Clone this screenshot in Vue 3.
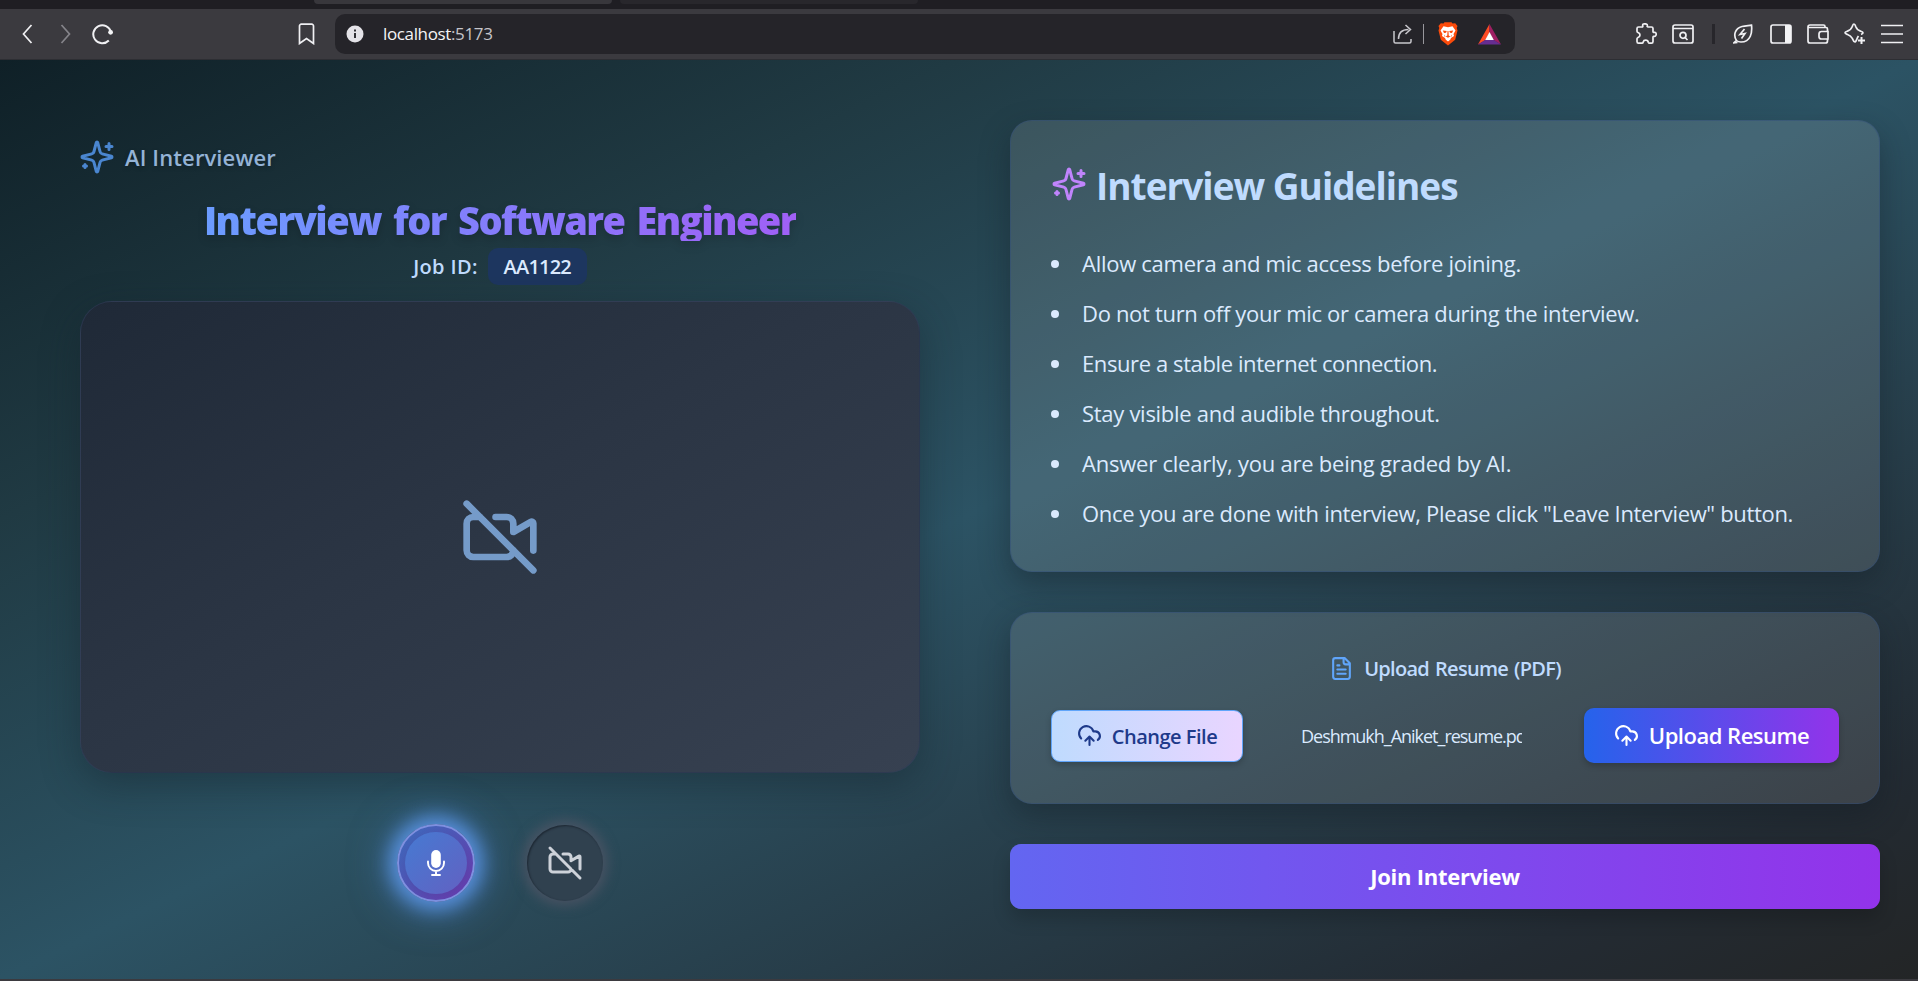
<script setup>
const guidelines = [
  { text: 'Allow camera and mic access before joining.', cls: 'g1' },
  { text: 'Do not turn off your mic or camera during the interview.', cls: 'g2' },
  { text: 'Ensure a stable internet connection.', cls: 'g3' },
  { text: 'Stay visible and audible throughout.', cls: 'g4' },
  { text: 'Answer clearly, you are being graded by AI.', cls: 'g5' },
  { text: 'Once you are done with interview, Please click "Leave Interview" button.', cls: 'g6' },
]
</script>

<template>
  <div class="window">
    <div class="tabstrip"><span class="tab active"></span><span class="tab"></span></div>
    <header class="toolbar">
      <svg class="i-back" width="11" height="20" viewBox="0 0 11 20"><path d="M9.5 1 1.5 10l8 9" /></svg>
      <svg class="i-fwd" width="11" height="20" viewBox="0 0 11 20"><path d="m1.5 1 8 9-8 9" /></svg>
      <svg class="i-reload" width="22" height="22" viewBox="0 0 22 22"><path d="M16.8 17.5A9 9 0 1 1 19 9" /><circle cx="18.6" cy="9.3" r="2.4" fill="#f3f3f5" stroke="none" /></svg>
      <svg class="i-mark" width="17" height="22" viewBox="0 0 17 22"><path d="M1.5 3a1.8 1.8 0 0 1 1.8-1.8h10.4A1.8 1.8 0 0 1 15.500 3v17.500l-7-5-7 5z" /></svg>
      <div class="address">
        <svg class="i-info" width="18" height="18" viewBox="0 0 18 18"><circle cx="9" cy="9" r="8.500" fill="#e4e3e8" stroke="none" /><path d="M9 8v5M9 4.500v2" stroke="#303034" stroke-width="2" /></svg>
        <span class="url">localhost<i>:5173</i></span>
        <svg class="i-share" width="20" height="20" viewBox="0 0 20 20"><path d="M1 7v10.500A1.500 1.500 0 0 0 2.500 19h14a1.500 1.500 0 0 0 1.500-1.500V15M5.500 15c0-6 3-9.500 10-9.500M12.500 1l5 4.500-5 4.500" /></svg>
        <span class="bar"></span>
        <svg class="i-brave" width="20" height="24" viewBox="0 0 20 24" stroke="none"><path fill="#fb4b0b" d="m5.500 1.500 1-1.300h7l1 1.300 2.700-.2L19.500 4l-.8 2 .8 2.500-2.300 9.200L10 23.500l-7.200-5.800L.5 8.500 1.300 6 .5 4l2.300-2.700z" /><path fill="#fff" d="m5.500 4.300 4.500.9 4.500-.9 3 4.200-2 3.500.5 2-3 2-.8 1.800L10 19.500l-2.200-1.700L7 16l-3-2 .5-2-2-3.500z" /><path fill="#fb4b0b" d="m4.800 8.500 4 .6-.8 1.600-2 .3zM15.200 8.500l-4 .6.8 1.600 2 .3zM9.500 9h1l.2 4.500 1.600 1-2.300 1.300-2.300-1.300 1.600-1zM6.500 12.500l1 2.500-1.200-.8zM13.500 12.500l-1 2.500 1.200-.8z" /></svg>
        <svg class="i-bat" width="23" height="21" viewBox="0 0 23 21" stroke="none"><path fill="#ff4b24" d="M11.500 0 0 20.500l7.500-4.600 4-7.400z" /><path fill="#9e1f63" d="M11.500 0 23 20.500l-7.500-4.600-4-7.400z" /><path fill="#662d91" d="M0 20.500h23l-7.500-4.800h-8z" /><path fill="#fff" d="m11.500 8 4.300 8H7.200z" /></svg>
      </div>
      <div class="tools">
        <svg width="22" height="22" viewBox="0 0 22 22"><path d="M2 5.500Q2 4 3.500 4H7c.8 0 1-.6.700-1.300C7.300 1 9 .800 10 .800s2.700.4 2.300 2C12 3.500 12.300 4 13 4h3.500Q18 4 18 5.500v3c0 .8.500 1 1.300.8 1.300-.2 1.900 1 1.900 2s-.8 2.200-2 2c-.7-.2-1.200.2-1.200 1v4.200q0 1.700-1.500 1.700h-2c-1 0-1-.4-1.200-1-.3-1.400-1.300-2-2.600-2s-2.200.5-2.500 1.800c-.2.900-.5 1.200-1.200 1.200H3.500Q2 20.200 2 18.500v-2.700c0-.8.4-1 1-1.300C4.300 14 5 13.300 5 12s-.8-2-2-2.500c-.6-.3-1-.6-1-1.300z" /></svg>
        <svg width="22" height="20" viewBox="0 0 22 20"><rect x="1" y="1" width="20" height="18" rx="2" /><path d="M1 4.500h20M13 13.500l2.500 2.500" /><circle cx="11" cy="11.300" r="3" /></svg>
        <span class="sep"></span>
        <svg class="i-leaf" width="20" height="20" viewBox="0 0 20 20"><path d="M3.500 16.500C0 11 2 4.500 9 2.500c3.500-.9 6.500-.8 9.500-1.300.8 7-.5 16.800-10.500 16.800-2 0-3.500-.5-4.500-1.500L1 18.800l3.500-.3M11.500 5 7 10.500l5-1-3.500 5" /></svg>
        <svg width="22" height="20" viewBox="0 0 22 20"><rect x="1" y="1" width="20" height="18" rx="2" /><path d="M15 1h6v18h-6z" fill="#f3f3f5" stroke="none" /></svg>
        <svg width="22" height="20" viewBox="0 0 22 20"><path d="M20.500 7V5q0-1.500-1.500-1.500H1.500M18 3.500V2.500Q18 1 16.500 1H3Q1 1 1 3v14q0 2 2 2h15.500q2 0 2-2v-2M21 7.500h-6.500Q12 7.500 12 10v2.500q0 2.500 2.500 2.500H21z" /></svg>
        <svg width="22" height="22" viewBox="0 0 22 22"><path stroke-linejoin="round" d="M14.500 13c-.6.8-1.100 1.700-1.500 2.700-.5 1.300-.9 2.600-2 3.300-1.500-.2-2-2-2.500-3.300C7.300 13.500 6 12.300 3.500 11.500 2.300 11.100 1 10.800 1 9.800s1.300-1.300 2.500-1.700C6 7.300 7.300 6 8.300 3.500 8.800 2.200 9 1 10 1s1.300 1.200 1.700 2.500c.9 2.500 2.300 3.800 4.800 4.600 1.200.4 2.500.7 2.500 1.700s-1 1.200-2 1.600" /><path stroke-width="2" d="M17.500 14v7M14 17.500h7" /></svg>
        <svg width="22" height="20" viewBox="0 0 22 20"><path d="M0 1.500h22M0 10h22M0 18.500h22" /></svg>
      </div>
    </header>

    <main class="page">
      <section class="left">
        <div class="brand">
          <svg class="lucide" width="36" height="36" viewBox="0 0 24 24"><path d="M9.937 15.500A2 2 0 0 0 8.500 14.063l-6.135-1.582a.5.5 0 0 1 0-.962L8.500 9.936A2 2 0 0 0 9.937 8.500l1.582-6.135a.5.5 0 0 1 .963 0L14.063 8.500A2 2 0 0 0 15.500 9.937l6.135 1.581a.5.5 0 0 1 0 .964L15.500 14.063a2 2 0 0 0-1.437 1.437l-1.582 6.135a.5.5 0 0 1-.963 0zM20 3v4M22 5h-4M4 17v2M5 18H3" /></svg>
          <span>AI Interviewer</span>
        </div>
        <h1><span>Interview for Software Engineer</span></h1>
        <div class="job"><span class="job-label">Job ID:</span><span class="badge">AA1122</span></div>
        <div class="video">
          <svg class="lucide" width="80" height="80" viewBox="0 0 24 24"><path d="M10.660 6H14a2 2 0 0 1 2 2v2.500l5.248-3.062A.5.5 0 0 1 22 7.870v8.196M16 16a2 2 0 0 1-2 2H4a2 2 0 0 1-2-2V8a2 2 0 0 1 2-2h2M2 2l20 20" /></svg>
        </div>
        <div class="controls">
          <button class="mic"><span class="mic-inner">
            <svg width="18" height="26" viewBox="0 0 18 26"><rect x="4.200" y="0" width="9.600" height="18" rx="4.800" fill="#fff" /><path d="M1 11.500v1.500a8 8 0 0 0 16 0v-1.500M9 21v3.500M5 25h8" fill="none" stroke="#fff" stroke-width="1.900" stroke-linecap="round" /></svg>
          </span></button>
          <button class="cam">
            <svg class="lucide" width="36" height="36" viewBox="0 0 24 24"><path d="M10.660 6H14a2 2 0 0 1 2 2v2.500l5.248-3.062A.5.5 0 0 1 22 7.870v8.196M16 16a2 2 0 0 1-2 2H4a2 2 0 0 1-2-2V8a2 2 0 0 1 2-2h2M2 2l20 20" /></svg>
          </button>
        </div>
      </section>

      <section class="right">
        <div class="card guide">
          <h2>
            <svg class="lucide" width="36" height="36" viewBox="0 0 24 24"><path d="M9.937 15.500A2 2 0 0 0 8.500 14.063l-6.135-1.582a.5.5 0 0 1 0-.962L8.500 9.936A2 2 0 0 0 9.937 8.500l1.582-6.135a.5.5 0 0 1 .963 0L14.063 8.500A2 2 0 0 0 15.500 9.937l6.135 1.581a.5.5 0 0 1 0 .964L15.500 14.063a2 2 0 0 0-1.437 1.437l-1.582 6.135a.5.5 0 0 1-.963 0zM20 3v4M22 5h-4M4 17v2M5 18H3" /></svg>
            <span>Interview Guidelines</span>
          </h2>
          <ul>
            <li v-for="g in guidelines" :key="g.cls"><span :class="g.cls">{{ g.text }}</span></li>
          </ul>
        </div>
        <div class="card upload">
          <div class="label">
            <svg class="lucide" width="25" height="25" viewBox="0 0 24 24"><path d="M15 2H6a2 2 0 0 0-2 2v16a2 2 0 0 0 2 2h12a2 2 0 0 0 2-2V7zM14 2v4a2 2 0 0 0 2 2h4M10 9H8M16 13H8M16 17H8" /></svg>
            <span>Upload Resume (PDF)</span>
          </div>
          <div class="row">
            <button class="change">
              <svg class="lucide" width="25" height="25" viewBox="0 0 24 24"><path d="M12 13v8M4 14.899A7 7 0 1 1 15.710 8h1.790a4.500 4.500 0 0 1 2.500 8.242M8 17l4-4 4 4" /></svg>
              <span>Change File</span>
            </button>
            <div class="file"><span>Deshmukh_Aniket_resume.pdf</span></div>
            <button class="send">
              <svg class="lucide" width="25" height="25" viewBox="0 0 24 24"><path d="M12 13v8M4 14.899A7 7 0 1 1 15.710 8h1.790a4.500 4.500 0 0 1 2.500 8.242M8 17l4-4 4 4" /></svg>
              <span>Upload Resume</span>
            </button>
          </div>
        </div>
        <button class="join"><span>Join Interview</span></button>
      </section>
    </main>
  </div>
</template>

<style>
body { margin: 0; background: #232526; }
</style>

<style scoped>
* { box-sizing: border-box; }
.window { width: 1918px; height: 981px; overflow: hidden; display: flex; flex-direction: column; font-family: "Open Sans", "Noto Sans", sans-serif; background: #3b3a3f; }
button { border: 0; padding: 0; font-family: inherit; }
svg { flex: none; display: block; }
span { white-space: nowrap; }
.lucide { fill: none; stroke: currentColor; stroke-width: 2; stroke-linecap: round; stroke-linejoin: round; }

.tabstrip { height: 9px; flex: none; background: #1f1e23; display: flex; gap: 8px; padding-left: 314px; }
.tab { width: 298px; height: 4px; border-radius: 0 0 8px 8px; background: #28272c; }
.tab.active { background: #38373c; }

.toolbar { height: 51px; flex: none; display: flex; align-items: center; background: #3b3a3f; border-bottom: 1px solid #2d2e33; padding: 0 15px 0 22px; }
.toolbar svg { fill: none; stroke: #f0f0f3; stroke-width: 1.7; }
.toolbar .i-fwd { margin-left: 27px; stroke: #85848a; }
.i-reload { margin-left: 21px; }
.toolbar .i-reload { stroke-width: 2; }
.i-mark { margin-left: 184px; }
.address { width: 1180px; height: 40px; margin-left: 20px; border-radius: 10px; background: #252429; display: flex; align-items: center; padding-left: 11px; }
.url { margin-left: 19px; width: 1010px; padding-bottom: 2px; font-size: 17px; letter-spacing: -0.36px; color: #f4f4f6; }
.url i { font-style: normal; color: #c6c5ca; }
.toolbar .i-share { stroke: #c8c7cc; stroke-width: 1.5; }
.bar { width: 1px; height: 20px; background: #98979c; margin-left: 10px; }
.toolbar .i-brave, .toolbar .i-bat, .toolbar .i-info { stroke: none; }
.i-brave { margin-left: 14px; }
.i-bat { margin-left: 20px; }
.tools { margin-left: auto; display: flex; align-items: center; gap: 15px; }
.sep { width: 3px; height: 20px; background: #27262b; margin: 0 3px 0 3px; }
.i-leaf { margin-right: 2px; }

.page { height: 919px; flex: none; display: flex; align-items: flex-start; padding-left: 81px; background: linear-gradient(to bottom right, #0f2027 0%, #203a43 25%, #2c5364 50%, #232b33 88%, #232526 100%); }
.left { width: 838px; padding-top: 78px; display: flex; flex-direction: column; align-items: center; }
.brand { align-self: flex-start; height: 38px; margin-left: -2px; display: flex; align-items: center; gap: 10px; color: #4a86d0; }
.brand span { font-size: 22px; font-weight: 600; letter-spacing: 0.12px; color: #94b3d6; text-shadow: 0 2px 4px rgba(0, 0, 0, .25); }
h1 { margin: 24px 0 0; font-size: 38px; line-height: 40px; font-weight: 800; letter-spacing: -1.55px; word-spacing: 3.6px; filter: drop-shadow(0 4px 4px rgba(0, 0, 0, .18)); }
h1 span { display: block; height: 41px; background: linear-gradient(90deg, #6b9cff, #8878fb 55%, #a060f6); -webkit-background-clip: text; background-clip: text; color: transparent; }
.job { margin-top: 7px; height: 37px; display: flex; align-items: center; gap: 10px; color: #bfdbfe; font-size: 20px; }
.job-label { font-weight: 600; letter-spacing: 0.35px; }
.badge { width: 99px; height: 37px; line-height: 37px; text-align: center; border-radius: 10px; background: #1d365f; color: #dbeafe; font-weight: 600; letter-spacing: -0.8px; }
.video { width: 840px; height: 472px; margin-top: 16px; border-radius: 32px; border: 1px solid rgba(49, 62, 90, .6); background: linear-gradient(to bottom right, #1f2937, #2b3544 45%, #374151); display: flex; align-items: center; justify-content: center; color: #759bc9; box-shadow: 0 12px 38px rgba(20, 35, 45, .45); }
.controls { margin-top: 51px; display: flex; gap: 52px; height: 78px; align-items: center; }
.mic { width: 78px; height: 78px; border-radius: 50%; border: 2px solid #7e90e0; background: linear-gradient(135deg, #3b6cbd, #6a38ac); display: flex; align-items: center; justify-content: center; box-shadow: 0 0 18px 7px #568ed8, 0 2px 38px 9px rgba(78, 139, 220, .55); }
.mic-inner { width: 62px; height: 62px; border-radius: 50%; background: linear-gradient(135deg, #467ad2, #6261c2); display: flex; align-items: center; justify-content: center; filter: drop-shadow(0 2px 3px rgba(0, 0, 0, .05)); }
.cam { width: 76px; height: 76px; border-radius: 50%; background: #30414f; display: flex; align-items: center; justify-content: center; color: #cdd2d9; box-shadow: 0 0 12px 5px rgba(90, 88, 105, .6), inset 1px 1px 2px rgba(20, 28, 38, .7); }

.right { width: 870px; margin-left: 91px; padding-top: 60px; display: flex; flex-direction: column; }
.card { border: 1px solid rgba(48, 78, 125, .45); border-radius: 22px; background: rgba(250, 248, 248, .12); box-shadow: 0 12px 30px rgba(18, 28, 35, .4); }
.guide { height: 452px; padding: 45px 40px 0; }
h2 { margin: 0; height: 40px; display: flex; align-items: center; gap: 9px; color: #c084fc; }
h2 svg { margin-top: -5px; }
h2 span { font-size: 37px; line-height: 40px; font-weight: 700; letter-spacing: -1px; color: #bfdbfe; }
ul { margin: 33px 0 0; padding: 0; list-style: none; }
li { height: 50px; display: flex; align-items: center; font-size: 22px; color: #dbeafe; }
li span { padding-bottom: 2px; }
li::before { content: ""; width: 8px; height: 8px; border-radius: 50%; background: #dbeafe; margin-right: 23px; }
.g1 { letter-spacing: -0.28px; }
.g2 { letter-spacing: -0.32px; }
.g3 { letter-spacing: -0.4px; }
.g4 { letter-spacing: -0.29px; }
.g5 { letter-spacing: -0.23px; }
.g6 { letter-spacing: -0.335px; }
.upload { height: 192px; margin-top: 40px; padding: 42px 40px 0; }
.label { height: 26px; display: flex; align-items: center; justify-content: center; gap: 10px; color: #60a5fa; }
.label span { font-size: 20px; font-weight: 600; letter-spacing: -0.7px; word-spacing: 1.4px; color: #bfdbfe; }
.row { display: flex; align-items: center; margin-top: 27px; height: 55px; }
.change { width: 192px; height: 52px; border-radius: 9px; border: 1px solid #60a5fa; background: linear-gradient(90deg, #bfdbfe, #e9d5ff); display: flex; align-items: center; justify-content: center; gap: 10px; color: #1e3a8a; box-shadow: 0 3px 6px rgba(0, 0, 0, .2); }
.change span { padding-top: 2px; font-size: 20px; font-weight: 600; letter-spacing: -0.5px; }
.file { width: 221px; margin-left: 58px; overflow: hidden; font-size: 18px; letter-spacing: -1.02px; color: #dbeafe; }
.send { width: 255px; height: 55px; margin-left: auto; border-radius: 10px; background: linear-gradient(90deg, #2563eb, #9333ea); display: flex; align-items: center; justify-content: center; gap: 10px; color: #fff; box-shadow: 0 3px 6px rgba(0, 0, 0, .2); }
.send span { padding-bottom: 2px; font-size: 22px; font-weight: 600; letter-spacing: -0.5px; }
.join { height: 65px; margin-top: 40px; padding-bottom: 2px; border-radius: 11px; background: linear-gradient(90deg, #6366f1, #9333ea); color: #fff; font-size: 22px; font-weight: 700; letter-spacing: -0.25px; box-shadow: 0 10px 18px rgba(0, 0, 0, .18); }
</style>
